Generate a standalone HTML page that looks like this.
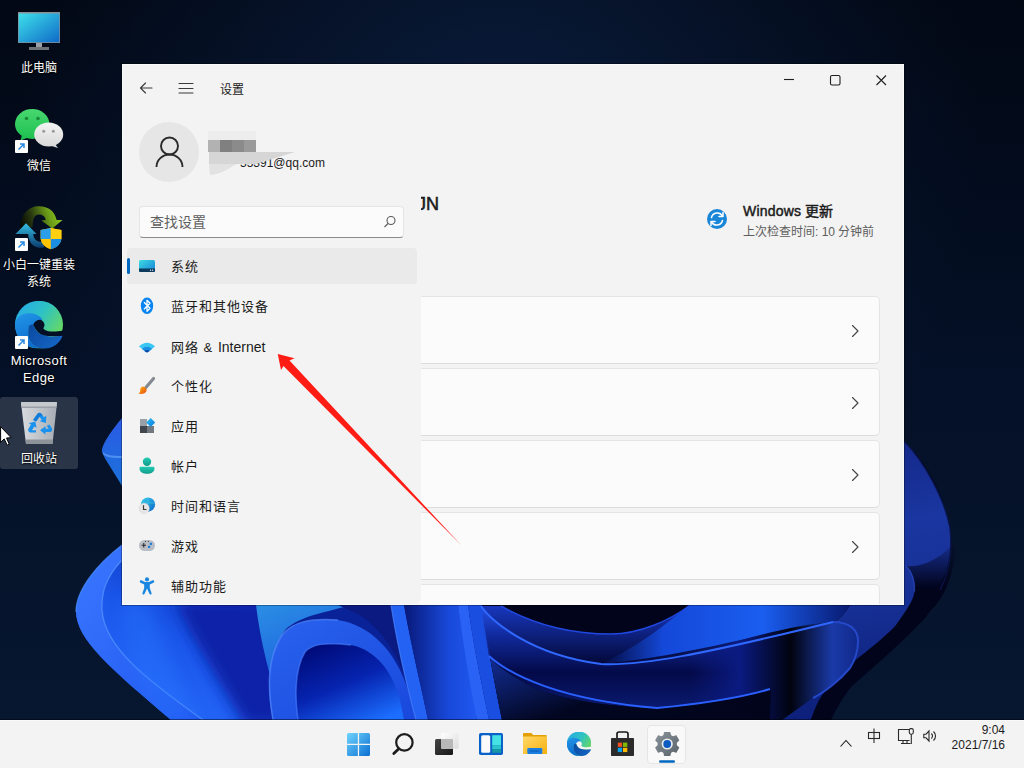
<!DOCTYPE html>
<html lang="zh-CN"><head><meta charset="utf-8">
<style>
*{margin:0;padding:0;box-sizing:border-box}
html,body{width:1024px;height:768px;overflow:hidden;background:#06101f;font-family:"Liberation Sans",sans-serif}
.abs{position:absolute}
#wall{position:absolute;left:0;top:0;width:1024px;height:720px}
.dlabel{position:absolute;color:#fff;font-size:12px;line-height:17px;text-align:center;text-shadow:0 1px 2px #000,0 0 1px #000}
#win{position:absolute;left:122px;top:64px;width:782px;height:541px;background:#f3f3f3;border:1px solid #fafafa;overflow:hidden}
.card{position:absolute;left:280px;width:477px;height:68px;background:#fbfbfb;border:1px solid #e5e5e5;border-bottom-color:#dcdcdc;border-radius:5px}
.nav{position:absolute;left:0;top:0;width:298px;height:540px;background:#f3f3f3;border-bottom-right-radius:8px;}
.item{position:absolute;left:171px;font-size:13px;letter-spacing:1px;color:#1b1b1b;line-height:20px;white-space:nowrap}
#task{position:absolute;left:0;top:720px;width:1024px;height:48px;background:#f3f3f3;border-top:1px solid #f9f9f9;box-shadow:0 -1px 0 rgba(0,0,0,0.45)}
</style></head><body>
<svg id="wall" width="1024" height="720" viewBox="0 0 1024 720">
<defs>
<linearGradient id="bg" x1="0" y1="0" x2="0" y2="1">
<stop offset="0" stop-color="#020814"/><stop offset="0.5" stop-color="#041026"/><stop offset="1" stop-color="#071730"/>
</linearGradient>
<radialGradient id="bgr" cx="500" cy="150" r="480" gradientUnits="userSpaceOnUse">
<stop offset="0" stop-color="#0a1d3e" stop-opacity="1"/><stop offset="0.5" stop-color="#081834" stop-opacity="0.6"/><stop offset="1" stop-color="#081834" stop-opacity="0"/>
</radialGradient>
<linearGradient id="gTip" x1="0" y1="0" x2="0" y2="1"><stop offset="0" stop-color="#2b5ae6"/><stop offset="1" stop-color="#1a72da"/></linearGradient>
<linearGradient id="gL1" x1="0" y1="0" x2="1" y2="1"><stop offset="0" stop-color="#3a78ff"/><stop offset="1" stop-color="#1f55ee"/></linearGradient>
<linearGradient id="gL2" x1="0.2" y1="1" x2="0.9" y2="0"><stop offset="0" stop-color="#2a70ff"/><stop offset="0.45" stop-color="#1a56ea"/><stop offset="1" stop-color="#0a26a8"/></linearGradient>
<linearGradient id="gC" x1="0" y1="0" x2="0.3" y2="1"><stop offset="0" stop-color="#2a8ee4"/><stop offset="1" stop-color="#1a50dc"/></linearGradient>
<linearGradient id="gA1" x1="0" y1="0" x2="1" y2="1"><stop offset="0" stop-color="#2a62ee"/><stop offset="1" stop-color="#1848dc"/></linearGradient>
<linearGradient id="gA2" x1="0.2" y1="0" x2="0.8" y2="1"><stop offset="0" stop-color="#000a78"/><stop offset="0.5" stop-color="#0624b0"/><stop offset="1" stop-color="#1c6eff"/></linearGradient>
<linearGradient id="gB" x1="338" y1="0" x2="480" y2="0" gradientUnits="userSpaceOnUse"><stop offset="0" stop-color="#081a88"/><stop offset="0.3" stop-color="#0a2298"/><stop offset="0.42" stop-color="#2060f8"/><stop offset="0.52" stop-color="#1848d8"/><stop offset="0.8" stop-color="#0a1e90"/><stop offset="0.86" stop-color="#2a62f4"/><stop offset="0.93" stop-color="#1030b0"/><stop offset="1" stop-color="#061478"/></linearGradient>
<linearGradient id="gBulge" x1="0" y1="0" x2="0.3" y2="1"><stop offset="0" stop-color="#1c3fb8"/><stop offset="0.6" stop-color="#12308f"/><stop offset="1" stop-color="#040a38"/></linearGradient>
<linearGradient id="gUp" x1="0" y1="0" x2="0" y2="1"><stop offset="0" stop-color="#1838c0"/><stop offset="1" stop-color="#030838"/></linearGradient>
<linearGradient id="gPetR" x1="0" y1="0" x2="1" y2="0"><stop offset="0" stop-color="#03083a"/><stop offset="0.25" stop-color="#1448d8"/><stop offset="0.65" stop-color="#1a5ef0"/><stop offset="1" stop-color="#081a70"/></linearGradient>
<linearGradient id="gRA" x1="0" y1="0" x2="0" y2="1"><stop offset="0" stop-color="#2452e8"/><stop offset="0.3" stop-color="#10289a"/><stop offset="0.65" stop-color="#040a48"/><stop offset="1" stop-color="#0a1a70"/></linearGradient>
<linearGradient id="gRB" x1="0" y1="0" x2="1" y2="1"><stop offset="0" stop-color="#1a40d0"/><stop offset="0.6" stop-color="#020620"/><stop offset="1" stop-color="#02041c"/></linearGradient>
<linearGradient id="gLobe" x1="0" y1="0" x2="1" y2="0"><stop offset="0" stop-color="#0a1a80" stop-opacity="0"/><stop offset="0.3" stop-color="#0a1a80"/><stop offset="0.6" stop-color="#01030f"/><stop offset="0.85" stop-color="#1a3aa8"/><stop offset="1" stop-color="#10288a"/></linearGradient>
<linearGradient id="gLow" x1="0" y1="0" x2="1" y2="0"><stop offset="0" stop-color="#02041c" stop-opacity="0"/><stop offset="1" stop-color="#02041c"/></linearGradient>
</defs>
<rect width="1024" height="720" fill="url(#bg)"/>
<rect width="1024" height="720" fill="url(#bgr)"/>
<!-- petal tip left -->
<path d="M122,418 C112,430 101,445 102,452 C104,458 114,472 122,486 Z" fill="url(#gTip)"/>
<path d="M103,454 C106,458 114,458 122,458 L122,456 C112,456 106,455 103,452 Z" fill="#5a9af5" opacity="0.8"/>
<!-- dark silhouette -->
<path d="M122,545 C100,562 76,588 76,612 C77,640 110,668 171,720 L831,720 C838,705 845,695 851,687 C870,670 900,645 925,618 C942,598 952,572 951,542 C950,505 930,465 904,441 L904,605 L122,605 Z" fill="#02041c"/>
<!-- right bulge -->
<linearGradient id="gBulge2" x1="904" y1="441" x2="950" y2="700" gradientUnits="userSpaceOnUse"><stop offset="0" stop-color="#14288a"/><stop offset="0.3" stop-color="#1a36a0"/><stop offset="0.6" stop-color="#162f94"/><stop offset="1" stop-color="#0c1e78"/></linearGradient>
<path d="M904,441 C925,462 945,500 950,528 C953,555 948,580 925,608 C900,635 870,660 841,683 L825,720 L690,720 L690,605 L904,605 Z" fill="url(#gBulge2)"/>
<linearGradient id="gCres" x1="0" y1="540" x2="0" y2="620" gradientUnits="userSpaceOnUse"><stop offset="0" stop-color="#02041c" stop-opacity="0"/><stop offset="0.6" stop-color="#02041c" stop-opacity="1"/></linearGradient>
<path d="M956,540 C955,580 940,605 928,612 C903,640 873,664 845,686 C838,697 833,707 829,722 L810,722 C816,705 820,697 825,691.5 C840,676 850,665 858,658 C875,645 890,632 896,625 C905,612 914,600 914.5,591.5 C915,580 912,572 906,566 C925,568 945,555 956,540 Z" fill="url(#gCres)"/>
<path d="M904,441 C925,462 945,500 950,528 C953,555 948,575 940,590" fill="none" stroke="#0a1448" stroke-width="1.4"/>
<path d="M906,566 C912,572 915,580 914.5,591.5" fill="none" stroke="#2a4ac0" stroke-width="1.5" opacity="0.7"/>
<!-- left lobe -->
<path d="M122,545 C100,562 76,588 76,612 C77,640 110,668 171,720 L284,720 L256,605 L122,605 Z" fill="url(#gL2)"/>
<path d="M122,545 C100,562 76,588 76,612 C77,640 110,668 171,720 L203,720 C150,682 104,648 102,610 C101,590 108,575 122,560 Z" fill="url(#gL1)"/>
<path d="M203,720 C150,682 104,648 102,610 C101,590 108,575 122,560" fill="none" stroke="#5a98ff" stroke-width="1.3" opacity="0.7"/>
<path d="M122,545 C100,562 76,588 76,612" fill="none" stroke="#4a90ff" stroke-width="1.5" opacity="0.6"/>
<filter id="fsoft" x="-50%" y="-50%" width="200%" height="200%"><feGaussianBlur stdDeviation="7"/></filter>
<clipPath id="clipL"><path d="M122,545 C100,562 76,588 76,612 C77,640 110,668 171,720 L284,720 L256,605 L122,605 Z"/></clipPath>
<g clip-path="url(#clipL)">
<path d="M175,600 C190,635 215,675 245,725 L300,725 L270,600 Z" fill="#0820a8" filter="url(#fsoft)"/>
<path d="M120,600 L150,600 C160,640 175,675 200,725 L150,725 C140,690 125,640 120,600 Z" fill="#2a78ff" opacity="0.35" filter="url(#fsoft)"/>
</g>
<!-- cyan petal -->
<path d="M256,605 L416,605 L416,720 L284,720 C270,680 260,640 256,605 Z" fill="#0a2298"/>
<path d="M256,605 L350,605 C330,612 300,615 285,630 C268,655 266,690 273,720 L284,720 C270,680 260,640 256,605 Z" fill="url(#gC)"/>
<!-- outer arch -->
<path d="M273,720 C268,690 266,660 282,635 C292,622 310,618 338,620 C370,625 395,650 408,690 L416,720 Z" fill="url(#gA1)"/>
<path d="M273,720 C268,690 266,660 282,635 C292,622 310,618 338,620" fill="none" stroke="#5a90ff" stroke-width="1.5" opacity="0.6"/>
<path d="M298,720 C295,700 294,670 305,652 C312,644 325,642 351,645 C375,650 392,670 400,700 L404,720 Z" fill="url(#gA2)"/>
<path d="M298,720 C295,700 294,670 305,652 C312,644 325,642 351,645" fill="none" stroke="#4a80ff" stroke-width="1.5" opacity="0.6"/>
<!-- band right of arches -->
<path d="M338,605 L500,605 L520,720 L416,720 C410,680 395,640 360,615 Z" fill="#0a1a80"/>
<linearGradient id="gFold" x1="0" y1="0" x2="1" y2="0"><stop offset="0" stop-color="#081878"/><stop offset="0.6" stop-color="#1848d8"/><stop offset="1" stop-color="#2058f0"/></linearGradient>
<path d="M391,605 L404,605 C412,650 422,690 428,720 L416,720 C408,690 398,650 391,605 Z" fill="#2462f4"/>
<path d="M391,605 C398,650 408,690 416,720" fill="none" stroke="#4a84ff" stroke-width="1.2" opacity="0.7"/>
<path d="M404,605 L458,605 C465,650 473,690 477,720 L428,720 C422,690 412,650 404,605 Z" fill="url(#gFold)"/>
<path d="M458,605 L468,605 C474,650 483,690 489,720 L477,720 C471,690 464,650 458,605 Z" fill="#2a62f6"/>
<path d="M468,605 L482,605 C488,650 496,690 502,720 L489,720 C483,690 474,650 468,605 Z" fill="#1a4ee0"/>
<!-- middle -->
<path d="M482,605 L850,605 C845,613 840,620 833,622 L770,720 L502,720 C496,690 488,650 482,605 Z" fill="#02041c"/>
<path d="M481,606 C490,620 530,655 601,664 C640,666 700,655 790,628 L790,605 L689,606 C670,620 640,634 611,634 C580,634 540,628 501,606 Z" fill="url(#gUp)"/>
<path d="M689,605 L850,605 C845,613 840,620 833,622 C790,625 700,655 601,664 C640,645 665,625 689,605 Z" fill="url(#gPetR)"/>
<path d="M481,606 C490,620 530,655 601,664 C640,666 700,655 833,622 L770,688 C750,695 720,702 657,708 C620,708 560,700 532,687 C510,675 495,665 489,656 Z" fill="url(#gRA)"/>
<path d="M484,620 L489,656 C495,665 510,675 532,687 C560,700 620,708 657,708 C720,702 750,695 770,688 L770,720 L502,720 C496,690 490,660 484,620 Z" fill="url(#gRB)"/>
<path d="M690,704 C720,702 750,695 770,688 C772,695 770,705 770,720 L690,720 Z" fill="url(#gLow)"/>
<!-- right lobe -->
<path d="M690,655 C740,640 790,625 833,622 C850,622 858,630 858,641 C858,652 855,660 850,668 C840,680 825,692 813,698 L782,720 L770,720 C770,705 772,695 770,688 C750,695 720,702 690,704 Z" fill="url(#gLobe)"/>
<path d="M833,622 C850,622 858,630 858,641 C858,652 855,660 850,668 C840,680 825,692 813,698" fill="none" stroke="#2448c8" stroke-width="2"/>
<path d="M481,606 C490,620 530,655 601,664 C640,666 700,655 833,622" fill="none" stroke="#3068ff" stroke-width="2"/>
<path d="M489,656 C510,675 560,700 657,708 C720,702 750,695 770,689" fill="none" stroke="#2a60ff" stroke-width="2"/>
<path d="M501,606 C540,628 580,634 611,634 C640,634 670,620 689,606" fill="none" stroke="#2048e0" stroke-width="1.5"/>
</svg>





















<svg width="0" height="0" style="position:absolute">
  <defs>
    <linearGradient id="egA" x1="0" y1="0" x2="1" y2="0.7"><stop offset="0" stop-color="#26a6ec"/><stop offset="0.5" stop-color="#2ec2c4"/><stop offset="1" stop-color="#70dc54"/></linearGradient>
    <linearGradient id="egB" x1="0" y1="0" x2="0.3" y2="1"><stop offset="0" stop-color="#2296e6"/><stop offset="1" stop-color="#0c6cd0"/></linearGradient>
    <linearGradient id="egC" x1="0" y1="0" x2="1" y2="0.6"><stop offset="0" stop-color="#0a48a0"/><stop offset="1" stop-color="#1464c2"/></linearGradient>
    <mask id="egM" maskUnits="userSpaceOnUse" x="0" y="0" width="48" height="48">
      <rect width="48" height="48" fill="#fff"/>
      <path d="M18.1,24 C19.5,20.5 22.5,19 25,19 C27.5,19.2 29.3,21.5 29.5,24 C29.5,25.5 29,26.5 28.2,27.5 C29.5,29.5 32,30.5 36,30.8 C40.5,31 44,30.6 48,29.8 L48,36 L28.6,35 C24,33.5 20,29 18.1,24 Z" fill="#000"/>
    </mask>
    <symbol id="edgeSym" viewBox="0 0 48 48">
      <g mask="url(#egM)">
        <circle cx="24" cy="24" r="24" fill="url(#egA)"/>
        <path d="M0.2,21 C3,15 8,12.4 13.5,12.4 C19,12.4 24,14 27.5,18.5 L18.1,24 L13.9,25.4 C13.4,27 13.2,29.5 13.2,32 C13,38 16,43.5 21.6,46.5 L24,48 A24,24 0 0 1 0.2,21 Z" fill="url(#egB)"/>
      </g>
      <path d="M13.9,25.4 C15.5,24 17,23.6 18.1,24 C19.5,26 20,28.5 21.6,30.3 C23.5,32.5 26,33.8 28.6,34.5 C34,36 40,36.2 47.5,35 C46.5,39 43,43.5 37,46.3 C32,48.3 26,48.5 21.6,46.5 C16,43.5 13,38 13.2,32 C13.2,29.5 13.4,27 13.9,25.4 Z" fill="url(#egC)"/>
    </symbol>
  </defs>
</svg>
<!-- desktop icons -->
<div class="abs" style="left:0;top:397px;width:78px;height:72px;background:rgba(255,255,255,0.15);border-radius:3px"></div>
<svg class="abs" style="left:0;top:0" width="100" height="480">
  <defs>
    <linearGradient id="dmon" x1="0" y1="0" x2="1" y2="1"><stop offset="0" stop-color="#3ee0ea"/><stop offset="1" stop-color="#0f6ac8"/></linearGradient>
    <linearGradient id="dwc1" x1="0" y1="0" x2="0" y2="1"><stop offset="0" stop-color="#48d870"/><stop offset="1" stop-color="#1ec050"/></linearGradient>
    <linearGradient id="dwc2" x1="0" y1="0" x2="0" y2="1"><stop offset="0" stop-color="#f4f4f4"/><stop offset="1" stop-color="#d8d8d8"/></linearGradient>
    <linearGradient id="dedge1" x1="0" y1="0" x2="1" y2="1"><stop offset="0" stop-color="#2fa8e8"/><stop offset="0.55" stop-color="#38c8a0"/><stop offset="1" stop-color="#78e060"/></linearGradient>
    <linearGradient id="dedge2" x1="0" y1="0" x2="1" y2="1"><stop offset="0" stop-color="#1a8ae0"/><stop offset="1" stop-color="#0a4aa8"/></linearGradient>
    <linearGradient id="dbin" x1="0" y1="0" x2="1" y2="0"><stop offset="0" stop-color="#d8dce0"/><stop offset="1" stop-color="#a8adb4"/></linearGradient>
    <linearGradient id="dxb1" x1="0" y1="0" x2="1" y2="1"><stop offset="0" stop-color="#1a2a10"/><stop offset="0.6" stop-color="#5a9a18"/><stop offset="1" stop-color="#88c828"/></linearGradient>
    <linearGradient id="dxb2" x1="0" y1="0" x2="0" y2="1"><stop offset="0" stop-color="#38b8e8"/><stop offset="1" stop-color="#0a3a70"/></linearGradient>
  </defs>
  <!-- This PC -->
  <rect x="18" y="12" width="42" height="31" fill="#8a9096"/>
  <rect x="18.7" y="13.5" width="40.6" height="28.8" fill="url(#dmon)"/>
  <rect x="36" y="43" width="6" height="4" fill="#9aa0a6"/>
  <rect x="29" y="47" width="20" height="3" fill="#6e7378"/>
  <!-- WeChat -->
  <ellipse cx="32.2" cy="124" rx="17.2" ry="15" fill="url(#dwc1)"/>
  <path d="M22,135 L20.5,140.5 L28,137.5 Z" fill="#22c054"/>
  <circle cx="26.5" cy="118.5" r="1.8" fill="#1a8a3a"/><circle cx="38" cy="118.5" r="1.8" fill="#1a8a3a"/>
  <ellipse cx="48.7" cy="134.5" rx="14.5" ry="12" fill="url(#dwc2)"/>
  <path d="M55,144 L58,148 L50,145.5 Z" fill="#d8d8d8"/>
  <circle cx="43.7" cy="131.3" r="1.5" fill="#9a9a9a"/><circle cx="53.3" cy="131.3" r="1.5" fill="#9a9a9a"/>
  <!-- XiaoBai -->
  <linearGradient id="dxg" x1="20" y1="229" x2="62" y2="215" gradientUnits="userSpaceOnUse"><stop offset="0" stop-color="#000000"/><stop offset="0.35" stop-color="#2a3a10"/><stop offset="0.7" stop-color="#6a9a18"/><stop offset="1" stop-color="#90cc20"/></linearGradient>
  <linearGradient id="dxbl" x1="0" y1="223" x2="0" y2="248" gradientUnits="userSpaceOnUse"><stop offset="0" stop-color="#36c0e6"/><stop offset="1" stop-color="#0a3a6a"/></linearGradient>
  <path d="M20.2,229 C20,214 29,206 39.2,206.2 C48,206.4 55,211 56.6,220 L62.5,220 L52.3,228.6 L41.3,220.4 L45.7,220 C45,216 42,214.6 39,214.6 C34,214.6 32.6,220 32.6,227 Z" fill="url(#dxg)"/>
  <path d="M26,223.3 L36.6,234 L33.2,234 C33.5,238 36,241.5 40,241.8 L44,241.5 L44,247.6 C41,248 39,247.8 37,247.3 C31,245.5 28.5,240 28.2,234 L15.5,234 Z" fill="url(#dxbl)"/>
  <path d="M40.6,230 C44,229.5 47.5,229 50.8,227.8 C54,229 57.5,229.5 61.4,230 L61.4,238 C61.4,243 57,247.5 50.8,249.2 C44.6,247.5 40.6,243 40.6,238 Z" fill="#ffc400"/>
  <path d="M40.6,230 C44,229.5 47.5,229 50.8,227.8 L50.8,239 L40.6,239 Z" fill="#2a9ee8"/>
  <path d="M50.8,239 L61.4,239 C61,244 57,247.8 50.8,249.2 Z" fill="#1a8ee0"/>
  <path d="M50.8,227.8 C54,229 57.5,229.5 61.4,230 L61.4,239 L50.8,239 Z" fill="#ffcf10"/>
  <use href="#edgeSym" x="15" y="300.75" width="48" height="48"/>
  <!-- shortcut badges -->
  <g>
    <rect x="15" y="140" width="13" height="13" fill="#fff" rx="1"/>
    <path d="M18.5,149.5 L24,144 M20,144 H24 V148" fill="none" stroke="#2a8ae0" stroke-width="1.5"/>
    <rect x="15" y="238" width="13" height="13" fill="#fff" rx="1"/>
    <path d="M18.5,247.5 L24,242 M20,242 H24 V246" fill="none" stroke="#2a8ae0" stroke-width="1.5"/>
    <rect x="15" y="336" width="13" height="13" fill="#fff" rx="1"/>
    <path d="M18.5,345.5 L24,340 M20,340 H24 V344" fill="none" stroke="#2a8ae0" stroke-width="1.5"/>
  </g>
  <!-- Recycle bin -->
  <path d="M21,403 L57,403 L52.5,444 L26,444 Z" fill="url(#dbin)"/>
  <path d="M21,402 L57,402 L56.5,406.5 L21.5,406.5 Z" fill="#c4c9ce"/>
  <path d="M21.5,406.5 L56.5,406.5 L56.3,408 L21.7,408 Z" fill="#9aa0a6"/>
  <path d="M25.7,439.5 L52.9,439.5 L52.5,444 L26,444 Z" fill="#8e9399"/>
  <g fill="#1a92ee">
    <path d="M33,420 L37.5,413.8 C38.5,412.5 40.5,412.5 41.5,413.8 L44,417.2 L46.3,415.8 L46,423 L39.8,421.2 L41.8,420 L39.5,416.8 L36.2,421.5 Z"/>
    <path d="M49.5,424.5 L52,428.5 C52.8,430 51.8,432 50,432 L45.5,432 L45.5,434.6 L40,430.3 L45.5,426.2 L45.5,428.8 L48.8,428.8 L46.8,425.8 Z"/>
    <path d="M36,432.4 L30.5,432.4 C28.5,432.4 27.5,430.3 28.5,428.8 L31,424.6 L28.8,423.3 L35.3,421.4 L36.6,428 L34.3,426.6 L32,430.3 L36,430.3 Z"/>
  </g>
  <path d="M33,420 L37.5,413.8 C38.5,412.5 40.5,412.5 41.5,413.8 L42.5,415.2 L39.5,416.8 L36.2,421.5 Z" fill="#0a68c8" opacity="0.55"/>
  <!-- cursor -->
  <path d="M0.6,426.6 L0.6,442.3 L4.2,438.9 L7.2,445.2 L9.3,444.3 L6.5,438 L11.2,437.7 Z" fill="#fff" stroke="#000" stroke-width="1"/>
</svg>
<div class="dlabel" style="left:0;top:60px;width:78px">此电脑</div>
<div class="dlabel" style="left:0;top:158px;width:78px">微信</div>
<div class="dlabel" style="left:0;top:257px;width:78px;line-height:16.5px">小白一键重装<br>系统</div>
<div class="dlabel" style="left:0;top:352px;width:78px;font-size:13px;letter-spacing:0.4px">Microsoft<br>Edge</div>
<div class="dlabel" style="left:0;top:451px;width:78px">回收站</div>

<!-- settings window -->
<div class="abs" style="left:121px;top:63px;width:784px;height:543px;background:rgba(0,0,0,0.3)"></div>
<div id="win">
  <div class="card" style="top:231px"></div>
  <div class="card" style="top:303px"></div>
  <div class="card" style="top:375px"></div>
  <div class="card" style="top:447px"></div>
  <div class="card" style="top:519px"></div>
  <div class="abs" style="left:294px;top:129px;font-size:18px;font-weight:normal;-webkit-text-stroke:0.55px #1b1b1b;color:#1b1b1b">JN</div>
  <div class="nav"></div>
</div>
<div class="abs" style="left:240px;top:155px;font-size:12px;line-height:16px;color:#1b1b1b;z-index:0">55391@qq.com</div>
<svg class="abs" style="left:0;top:0" width="1024" height="768">
  <defs>
    <linearGradient id="isys" x1="0" y1="0" x2="1" y2="1"><stop offset="0" stop-color="#3ddbe3"/><stop offset="1" stop-color="#1680d6"/></linearGradient>
    <linearGradient id="iglobe" x1="0" y1="0" x2="1" y2="1"><stop offset="0" stop-color="#3ad0ea"/><stop offset="1" stop-color="#0b63c8"/></linearGradient>
    <linearGradient id="ibrush" x1="0" y1="0" x2="1" y2="1"><stop offset="0" stop-color="#a8aeb6"/><stop offset="1" stop-color="#5e666e"/></linearGradient>
    <linearGradient id="itip" x1="0" y1="0" x2="1" y2="1"><stop offset="0" stop-color="#ffb414"/><stop offset="1" stop-color="#e84c0c"/></linearGradient>
    <linearGradient id="iacc" x1="0" y1="0" x2="0" y2="1"><stop offset="0" stop-color="#22ccb4"/><stop offset="1" stop-color="#109a8a"/></linearGradient>
    <linearGradient id="idia" x1="0" y1="0" x2="1" y2="1"><stop offset="0" stop-color="#2cc0f4"/><stop offset="1" stop-color="#0a78e0"/></linearGradient>
  </defs>
  <!-- chevrons -->
  <g fill="none" stroke="#454545" stroke-width="1.15" stroke-linecap="round" stroke-linejoin="round">
    <path d="M852.5,325.5 L858,331 L852.5,336.5"/>
    <path d="M852.5,397.5 L858,403 L852.5,408.5"/>
    <path d="M852.5,469.5 L858,475 L852.5,480.5"/>
    <path d="M852.5,541.5 L858,547 L852.5,552.5"/>
  </g>
  <!-- caption buttons -->
  <g fill="none" stroke="#1f1f1f" stroke-width="1.1">
    <path d="M784,79.5 H794"/>
    <rect x="830.5" y="75.5" width="9.5" height="9.5" rx="1.5"/>
    <path d="M876.5,75.5 L886,85 M886,75.5 L876.5,85"/>
  </g>
  <!-- update icon -->
  <circle cx="717" cy="219" r="10" fill="#1a86d8"/>
  <g fill="none" stroke="#fff" stroke-width="1.5" stroke-linecap="round" stroke-linejoin="round">
    <path d="M711.5,217.5 A6,6 0 0 1 722.5,216"/>
    <path d="M722.5,220.5 A6,6 0 0 1 711.5,222"/>
    <path d="M723,212.5 V216.5 H719"/>
    <path d="M711,225.5 V221.5 H715"/>
  </g>
  <!-- back / hamburger -->
  <g fill="none" stroke="#3a3a3a" stroke-width="1.1" stroke-linecap="round" stroke-linejoin="round">
    <path d="M140.5,88 H152 M145.5,83 L140.5,88 L145.5,93"/>
    <path d="M179,83.5 H193 M179,88.5 H193 M179,93 H193"/>
  </g>
  <!-- avatar -->
  <circle cx="169" cy="152" r="30" fill="#e6e6e6"/>
  <g fill="none" stroke="#2a2a2a" stroke-width="1.9">
    <circle cx="169.5" cy="146" r="8.5"/>
    <path d="M156.5,167 A13,12.5 0 0 1 182.5,167"/>
  </g>
  <!-- mosaic -->
  <rect x="208" y="131" width="48" height="9" fill="#ededed"/>
  <rect x="208" y="140" width="12" height="12" fill="#b2b2b2"/>
  <rect x="220" y="140" width="12" height="12" fill="#808080"/>
  <rect x="232" y="140" width="12" height="12" fill="#8b8b8b"/>
  <rect x="244" y="140" width="12" height="12" fill="#9a9a9a"/>
  <path d="M209,152 H256 L295,152 L256,164 L209,164 Z" fill="#d6d6d6"/>
  <path d="M209,164 H237 C227,169 222,174 210,175 Z" fill="#e2e2e2"/>
  <!-- nav icons -->
  <rect x="139" y="260" width="16" height="12" rx="1.5" fill="url(#isys)"/>
  <path d="M139,268.5 H155 V270.5 A1.5,1.5 0 0 1 153.5,272 H140.5 A1.5,1.5 0 0 1 139,270.5 Z" fill="#0c3a5c"/>
  <circle cx="150.5" cy="270.2" r="0.7" fill="#ddd"/><circle cx="152.6" cy="270.2" r="0.7" fill="#ddd"/>
  <ellipse cx="147" cy="305.8" rx="6.2" ry="8.3" fill="#0a84f0"/>
  <path d="M144,302.3 L150,308.3 L147,311.3 V300.3 L150,303.3 L144,309.3" fill="none" stroke="#fff" stroke-width="1.3" stroke-linejoin="round"/>
  <path d="M139,346.5 Q147,339 155,346.5 L147,352.5 Z" fill="#3ac6f2"/>
  <path d="M141.8,349 Q147,344.5 152.2,349 L147,352.5 Z" fill="#1a8ee2"/>
  <path d="M144.2,351 Q147,349 149.8,351 L147,352.5 Z" fill="#0a4aa6"/>
  <path d="M153.5,378.5 L145.8,387.5" stroke="url(#ibrush)" stroke-width="3.2" stroke-linecap="round"/>
  <path d="M143.5,386.5 C140.5,386.5 140,389.5 140.2,391.5 C140,392.5 138.5,393 138.5,393.5 C141,394.5 145.5,394 146.5,391 C147,389.5 146,387.5 143.5,386.5 Z" fill="url(#itip)"/>
  <rect x="140" y="419" width="7" height="7" fill="#9aa0a8"/>
  <rect x="140" y="426" width="7" height="7" fill="#42464c"/>
  <rect x="147" y="426" width="7" height="7" fill="#72787f"/>
  <path d="M150.7,418 L155.2,422.5 L150.7,427 L146.2,422.5 Z" fill="url(#idia)"/>
  <circle cx="147" cy="461.7" r="4.2" fill="url(#iacc)"/>
  <path d="M140.5,466.8 H153.5 C154.5,466.8 154.5,468 154.5,469 C154,472.5 150.5,473.8 147,473.8 C143.5,473.8 140,472.5 139.5,469 C139.5,468 139.5,466.8 140.5,466.8 Z" fill="url(#iacc)"/>
  <circle cx="148" cy="504.6" r="7.1" fill="url(#iglobe)"/>
  <path d="M141,503 H155 M148,497.5 V511.5" fill="none" stroke="#55d6f0" stroke-width="0.8" opacity="0.6"/>
  <circle cx="144.2" cy="508.4" r="5.1" fill="#e6e6e6" stroke="#cfcfcf" stroke-width="0.5"/>
  <path d="M143.5,505.3 V509.5 H146.5" fill="none" stroke="#3a3a3a" stroke-width="1.2"/>
  <rect x="139" y="540" width="16" height="11" rx="5.5" fill="#b9bdc4"/>
  <path d="M141.5,545.2 H146 M143.75,543 V547.5" stroke="#2e2e2e" stroke-width="1.1"/>
  <rect x="149.8" y="542.8" width="2.2" height="2.2" fill="#1a7fe0"/>
  <rect x="148" y="545.8" width="2.2" height="2.2" fill="#1a7fe0"/>
  <circle cx="145.5" cy="541.5" r="0.6" fill="#333"/><circle cx="148.4" cy="541.5" r="0.6" fill="#333"/>
  <g fill="#1a86e0">
    <circle cx="147" cy="579.4" r="2.1"/>
    <path d="M139.8,581.2 C140,580 141,580 142,580.5 L145,582 H149 L152,580.5 C153,580 154,580 154.2,581.2 C154.4,582 153.8,582.5 153,583 L149.8,584.5 V588 L151.5,593 C151.8,594 151.3,594.5 150.5,594.5 C149.8,594.5 149.5,594 149.3,593.5 L147,588.5 L144.7,593.5 C144.5,594 144.2,594.5 143.5,594.5 C142.7,594.5 142.2,594 142.5,593 L144.2,588 V584.5 L141,583 C140.2,582.5 139.6,582 139.8,581.2 Z"/>
  </g>
</svg>
<!-- window texts -->
<div class="abs" style="left:220px;top:81px;font-size:12px;letter-spacing:0px;line-height:18px;color:#1b1b1b">设置</div>
<div class="abs" style="left:139px;top:206px;width:265px;height:32px;background:#fbfbfb;border:1px solid #e5e5e5;border-bottom-color:#8a8a8a;border-radius:4px"></div>
<svg class="abs" style="left:0;top:0" width="1024" height="768">
  <g fill="none" stroke="#5a5a5a" stroke-width="1.1">
    <circle cx="391" cy="220.5" r="4"/>
    <path d="M388,223.5 L384.5,227"/>
  </g>
</svg>
<div class="abs" style="left:150px;top:212px;font-size:14px;line-height:20px;color:#5f5f5f">查找设置</div>
<div class="abs" style="left:127px;top:248px;width:290px;height:36px;background:#eaeaea;border-radius:4px"></div>
<div class="abs" style="left:127px;top:258px;width:3px;height:16px;background:#0067c0;border-radius:2px"></div>
<svg class="abs" style="left:0;top:0" width="1024" height="300">
  <rect x="139" y="260" width="16" height="12" rx="1.5" fill="url(#isys)"/>
  <path d="M139,268.5 H155 V270.5 A1.5,1.5 0 0 1 153.5,272 H140.5 A1.5,1.5 0 0 1 139,270.5 Z" fill="#0c3a5c"/>
  <circle cx="150.5" cy="270.2" r="0.7" fill="#ddd"/><circle cx="152.6" cy="270.2" r="0.7" fill="#ddd"/>
</svg>
<div class="item" style="top:257px">系统</div>
<div class="item" style="top:297px">蓝牙和其他设备</div>
<div class="item" style="top:337px">网络 &amp; <span style="letter-spacing:0;font-size:14px">Internet</span></div>
<div class="item" style="top:377px">个性化</div>
<div class="item" style="top:417px">应用</div>
<div class="item" style="top:457px">帐户</div>
<div class="item" style="top:497px">时间和语言</div>
<div class="item" style="top:537px">游戏</div>
<div class="item" style="top:577px">辅助功能</div>
<div class="abs" style="left:743px;top:202px;font-size:14px;line-height:18px;font-weight:normal;-webkit-text-stroke:0.45px #1b1b1b;letter-spacing:0.2px;color:#1b1b1b">Windows 更新</div>
<div class="abs" style="left:743px;top:224px;font-size:12px;line-height:16px;color:#5d5d5d">上次检查时间: 10 分钟前</div>
<svg class="abs" style="left:0;top:0" width="1024" height="768">
  <path d="M277.75,354 L294.5,358.3 L289.5,360.5 L461.5,545.5 L283.5,366 L281,370 Z" fill="#ff1c14"/>
</svg>

<!-- taskbar -->
<div id="task">
  <div class="abs" style="left:647px;top:4px;width:39px;height:39px;background:#f9f9f9;border:1px solid #e6e6e6;border-radius:4px"></div>
  <div class="abs" style="left:930px;top:1px;width:75px;text-align:right;font-size:12px;line-height:16px;color:#1b1b1b">9:04</div>
  <div class="abs" style="left:930px;top:16px;width:75px;text-align:right;font-size:12px;line-height:16px;color:#1b1b1b">2021/7/16</div>
</div>
<svg class="abs" style="left:0;top:720px" width="1024" height="48" viewBox="0 720 1024 48">
  <defs>
    <linearGradient id="tstart" x1="0" y1="0" x2="1" y2="1"><stop offset="0" stop-color="#70d4fd"/><stop offset="1" stop-color="#0a6fd2"/></linearGradient>
    <linearGradient id="ttvd" x1="0" y1="0" x2="1" y2="1"><stop offset="0" stop-color="#444"/><stop offset="1" stop-color="#161616"/></linearGradient>
    <linearGradient id="ttvl" x1="0" y1="0" x2="1" y2="1"><stop offset="0" stop-color="#ffffff"/><stop offset="1" stop-color="#dcdcdc"/></linearGradient>
    <linearGradient id="tfold" x1="0" y1="0" x2="1" y2="1"><stop offset="0" stop-color="#ffd868"/><stop offset="1" stop-color="#f6b010"/></linearGradient>
    <linearGradient id="tedge1" x1="0" y1="0" x2="1" y2="1"><stop offset="0" stop-color="#2aa4ec"/><stop offset="0.55" stop-color="#34c6b0"/><stop offset="1" stop-color="#6ee060"/></linearGradient>
    <linearGradient id="tedge2" x1="0" y1="0" x2="1" y2="1"><stop offset="0" stop-color="#1c8ee4"/><stop offset="1" stop-color="#0a4ca8"/></linearGradient>
    <linearGradient id="tgear" x1="0" y1="0" x2="1" y2="1"><stop offset="0" stop-color="#8a9299"/><stop offset="1" stop-color="#5a636b"/></linearGradient>
  </defs>
  <!-- start -->
  <path d="M348.5,733 H357.8 V743.8 H347 V734.5 A1.5,1.5 0 0 1 348.5,733 Z M359.1,733 H368.5 A1.5,1.5 0 0 1 370,734.5 V743.8 H359.1 Z M347,745.1 H357.8 V756 H348.5 A1.5,1.5 0 0 1 347,754.5 Z M359.1,745.1 H370 V754.5 A1.5,1.5 0 0 1 368.5,756 H359.1 Z" fill="url(#tstart)"/>
  <!-- search -->
  <circle cx="404.4" cy="742.4" r="8.2" fill="none" stroke="#1c1c1c" stroke-width="2.2"/>
  <path d="M398.8,748.8 L393.8,753.6" stroke="#1c1c1c" stroke-width="2.8" stroke-linecap="round"/>
  <!-- task view -->
  <rect x="435" y="739" width="18" height="16" rx="1.5" fill="url(#ttvd)"/>
  <rect x="441" y="733" width="17.6" height="15.7" rx="1.5" fill="url(#ttvl)"/>
  <rect x="441" y="739" width="12" height="9.7" rx="1" fill="#b8b8b8"/>
  <!-- widgets -->
  <rect x="479" y="733" width="24" height="22" rx="1.8" fill="#0a62c8"/>
  <rect x="481.2" y="735.2" width="9" height="17.6" rx="1.5" fill="#fafafa"/>
  <rect x="492.2" y="735.2" width="8.8" height="10" fill="#44e2e4"/>
  <rect x="492.2" y="745.2" width="8.8" height="3.8" fill="#2cc4cc"/>
  <rect x="492.2" y="749" width="8.8" height="3.8" fill="#1696a6"/>
  <!-- explorer -->
  <path d="M524,733 H530.5 C531.5,733 532,733.5 533,735 H546.5 V754 H523 V734 C523,733.5 523.5,733 524,733 Z" fill="#e2a004"/>
  <rect x="523" y="736.5" width="24" height="17.5" rx="0.8" fill="url(#tfold)"/>
  <rect x="527.3" y="748" width="15" height="6" rx="1.2" fill="#1a7ee0"/>
  <rect x="530" y="750.5" width="9.5" height="1" fill="#0a58b0"/>
  <use href="#edgeSym" x="566.8" y="731.5" width="24.5" height="24.5"/>
  <!-- store -->
  <path d="M617,738 V734 A2,2 0 0 1 619,732 H626 A2,2 0 0 1 628,734 V738" fill="none" stroke="#1a1a1a" stroke-width="1.7"/>
  <rect x="611" y="738" width="23" height="18" rx="0.8" fill="#2b2b2b"/>
  <rect x="617.8" y="742.6" width="4.3" height="4.3" fill="#f25022"/>
  <rect x="623" y="742.6" width="4.3" height="4.3" fill="#7fba00"/>
  <rect x="617.8" y="747.8" width="4.3" height="4.3" fill="#00a4ef"/>
  <rect x="623" y="747.8" width="4.3" height="4.3" fill="#ffb900"/>
  <!-- settings gear -->
  <g transform="translate(667.2,744)">
    <path id="gearp" d="M-2.6,-11.5 H2.6 L3.3,-8.4 L5.8,-7 L8.8,-8.1 L11.4,-3.6 L9,-1.5 V1.5 L11.4,3.6 L8.8,8.1 L5.8,7 L3.3,8.4 L2.6,11.5 H-2.6 L-3.3,8.4 L-5.8,7 L-8.8,8.1 L-11.4,3.6 L-9,1.5 V-1.5 L-11.4,-3.6 L-8.8,-8.1 L-5.8,-7 L-3.3,-8.4 Z" fill="url(#tgear)" stroke="url(#tgear)" stroke-width="1.2" stroke-linejoin="round"/>
    <circle r="5.6" fill="#e8eaec"/>
    <circle r="3.9" fill="#0f5cc0"/>
  </g>
  <rect x="659" y="760.2" width="16" height="2.6" rx="1.3" fill="#0067c0"/>
  <!-- tray -->
  <path d="M840.5,746.5 L846,740.5 L851.5,746.5" fill="none" stroke="#1a1a1a" stroke-width="1.1"/>
  <g fill="none" stroke="#2a2a2a" stroke-width="1.1">
    <rect x="868.5" y="732.5" width="11" height="6"/>
    <path d="M874,728.5 V743"/>
    <path d="M909,729.5 H898.5 V740.5 H909.5"/>
    <path d="M903,740.5 V743.5 M907,740.5 V743.5 M901,743.5 H910.5"/>
    <rect x="909.3" y="728.6" width="4" height="5.6" rx="1.6"/>
    <path d="M911.3,734.2 V744"/>
    <path d="M923.8,734.2 H926 L929,731 V741 L926,737.8 H923.8 Z"/>
    <path d="M931.3,733.5 C932.8,735 932.8,737 931.3,738.5"/>
    <path d="M933.5,731.5 C936.2,734 936.2,738 933.5,740.5"/>
  </g>
</svg>
</body></html>
